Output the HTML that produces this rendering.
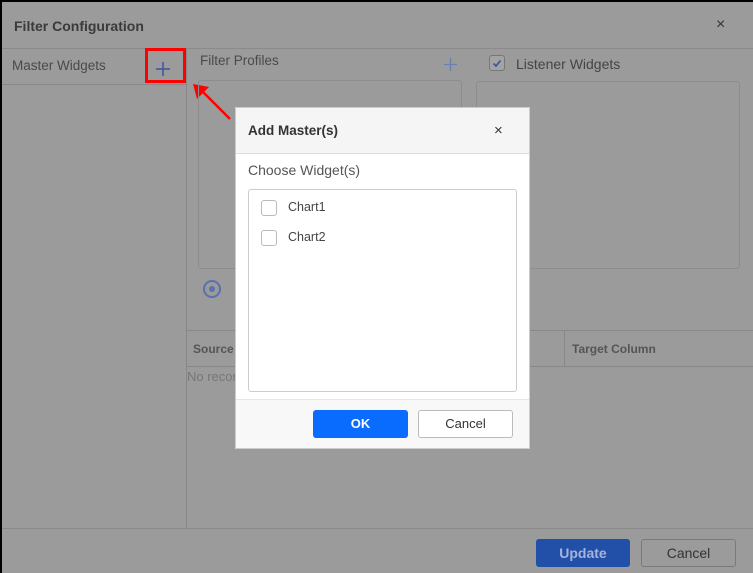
<!DOCTYPE html>
<html><head><style>
*{box-sizing:border-box;margin:0;padding:0}
body{width:753px;height:573px;background:#000;font-family:"Liberation Sans",sans-serif;position:relative;overflow:hidden}
.a{position:absolute}
#bg{left:2px;top:2px;width:751px;height:571px;background:#9b9b9b}
.t{color:#444}
</style></head><body>
<div id="bg" class="a"></div>
<div class="a t" style="left:14px;top:18px;font-size:14px;font-weight:bold;color:#3a3a3a">Filter Configuration</div>
<div class="a" style="left:716px;top:16px;font-size:16px;color:#333">×</div>
<div class="a" style="left:2px;top:48px;width:751px;height:1px;background:#8a8a8a"></div>
<div class="a" style="left:186px;top:48px;width:1px;height:480px;background:#888"></div>
<div class="a" style="left:2px;top:84px;width:184px;height:1px;background:#888"></div>
<div class="a t" style="left:12px;top:58px;font-size:13.5px;color:#4a4a4a">Master Widgets</div>
<svg class="a" style="left:155px;top:61px" width="16" height="16"><path d="M8 1V15M1 8H15" stroke="#3a55a0" stroke-width="1.5"/></svg>
<div class="a" style="left:145px;top:48px;width:41px;height:35px;border:3px solid #ff0000"></div>
<svg class="a" style="left:190px;top:80px" width="45" height="45"><line x1="40" y1="39" x2="12" y2="11" stroke="#f00" stroke-width="2.5"/><polygon points="3,4 19,7 7,19" fill="#f00"/></svg>
<div class="a" style="left:200px;top:53px;font-size:13.5px;color:#4a4a4a">Filter Profiles</div>
<svg class="a" style="left:443px;top:57px" width="15" height="15"><path d="M7.5 1V14M1 7.5H14" stroke="#6a80b0" stroke-width="1.3"/></svg>
<div class="a" style="left:198px;top:80px;width:264px;height:189px;border:1px solid #8c8c8c;border-radius:3px"></div>
<div class="a" style="left:489px;top:55px;width:16px;height:16px;border:1px solid #777;border-radius:3px;background:#a3a3a3"></div>
<svg class="a" style="left:489px;top:55px" width="16" height="16"><path d="M4.5 8.5L7 11L11.5 5.5" fill="none" stroke="#3a55a0" stroke-width="1.6"/></svg>
<div class="a" style="left:516px;top:56px;font-size:14px;color:#444">Listener Widgets</div>
<div class="a" style="left:476px;top:81px;width:264px;height:188px;border:1px solid #8c8c8c;border-radius:3px"></div>
<div class="a" style="left:203px;top:280px;width:18px;height:18px;border:2px solid #5a70b0;border-radius:50%"></div>
<div class="a" style="left:209px;top:286px;width:6px;height:6px;background:#5a70b0;border-radius:50%"></div>
<div class="a" style="left:187px;top:330px;width:566px;height:1px;background:#888"></div>
<div class="a" style="left:187px;top:366px;width:566px;height:1px;background:#888"></div>
<div class="a" style="left:564px;top:330px;width:1px;height:36px;background:#888"></div>
<div class="a" style="left:193px;top:342px;font-size:12px;font-weight:bold;color:#555">Source</div>
<div class="a" style="left:572px;top:342px;font-size:12px;font-weight:bold;color:#555">Target Column</div>
<div class="a" style="left:187px;top:369px;font-size:13px;color:#777">No records</div>
<div class="a" style="left:2px;top:528px;width:751px;height:1px;background:#8a8a8a"></div>
<div class="a" style="left:536px;top:539px;width:94px;height:28px;background:#2250a8;border-radius:3px;color:#a5b4d8;font-size:14px;font-weight:bold;text-align:center;line-height:28px">Update</div>
<div class="a" style="left:641px;top:539px;width:95px;height:28px;border:1px solid #7a7a7a;border-radius:3px;color:#333;font-size:14px;text-align:center;line-height:26px">Cancel</div>

<div class="a" style="left:235px;top:107px;width:295px;height:342px;background:#fff;border:1px solid #ccc"></div>
<div class="a" style="left:236px;top:108px;width:293px;height:46px;background:#f5f5f5;border-bottom:1px solid #ddd"></div>
<div class="a" style="left:248px;top:123px;font-size:13.5px;font-weight:bold;color:#333">Add Master(s)</div>
<div class="a" style="left:494px;top:122px;font-size:15px;color:#333">×</div>
<div class="a" style="left:248px;top:162px;font-size:14px;color:#555">Choose Widget(s)</div>
<div class="a" style="left:248px;top:189px;width:269px;height:203px;border:1px solid #ccc;border-radius:3px"></div>
<div class="a" style="left:261px;top:200px;width:16px;height:16px;border:1px solid #bbb;border-radius:3px"></div>
<div class="a" style="left:288px;top:200px;font-size:12.5px;color:#444">Chart1</div>
<div class="a" style="left:261px;top:230px;width:16px;height:16px;border:1px solid #bbb;border-radius:3px"></div>
<div class="a" style="left:288px;top:230px;font-size:12.5px;color:#444">Chart2</div>
<div class="a" style="left:236px;top:399px;width:293px;height:49px;background:#f8f8f8;border-top:1px solid #e6e6e6"></div>
<div class="a" style="left:313px;top:410px;width:95px;height:28px;background:#0a6cff;border-radius:3px;color:#fff;font-size:13px;font-weight:bold;text-align:center;line-height:28px">OK</div>
<div class="a" style="left:418px;top:410px;width:95px;height:28px;border:1px solid #bbb;border-radius:3px;background:#fff;color:#333;font-size:13px;text-align:center;line-height:26px">Cancel</div>
</body></html>
